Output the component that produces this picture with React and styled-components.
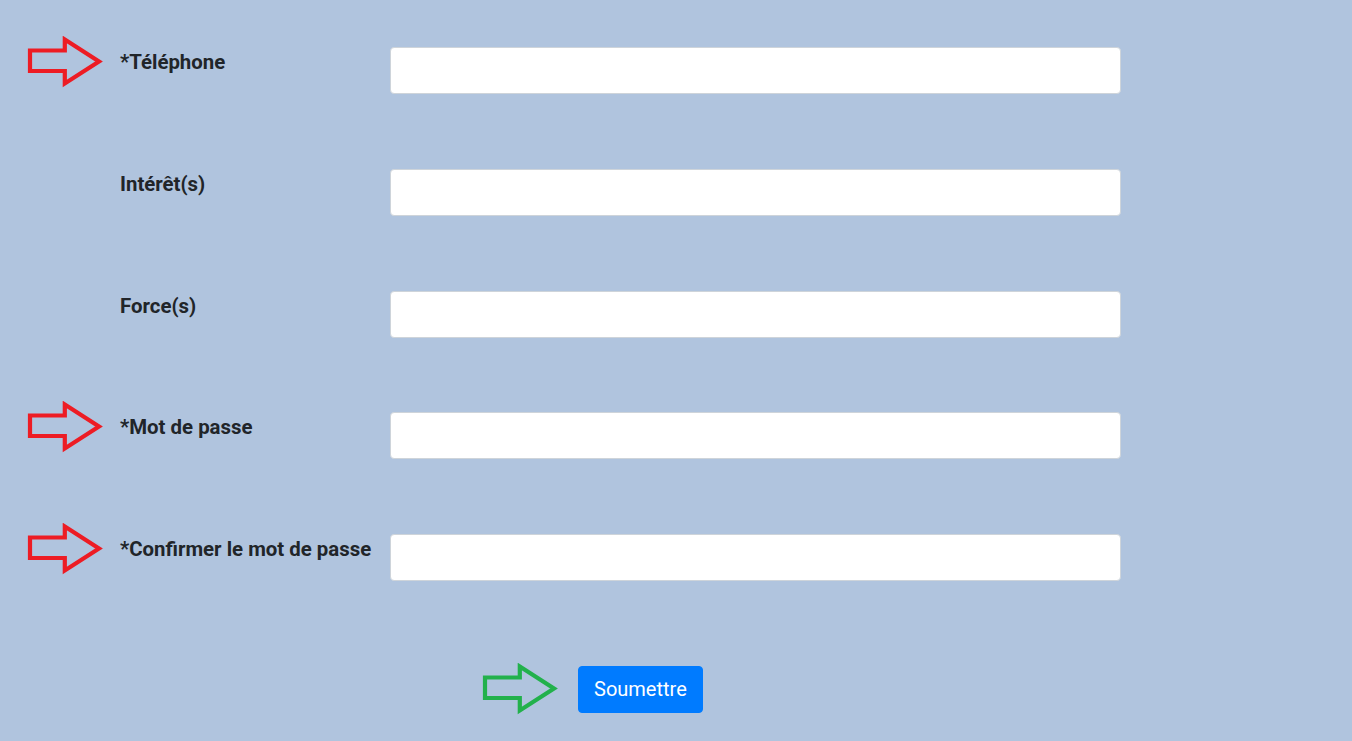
import React from "react";
import styled, { createGlobalStyle } from "styled-components";

const Global = createGlobalStyle`
  html, body { margin: 0; padding: 0; }
  body {
    background: #b0c4de;
    font-family: Roboto, "Liberation Sans", sans-serif;
    color: #212529;
    min-height: 741px;
  }
`;

const Form = styled.form`
  display: flex;
  flex-direction: column;
  padding-top: 36px;
`;

const Rows = styled.div`
  display: flex;
  flex-direction: column;
  gap: 63.75px;
`;

const Row = styled.div`
  display: grid;
  grid-template-columns: 120px 270px 731px;
  align-items: start;
`;

const ArrowCell = styled.div`
  padding-left: 26px;
  height: 52px;
`;

const Label = styled.label`
  font-size: 20.4px;
  font-weight: 700;
  line-height: 30px;
  padding-top: 11px;
  white-space: nowrap;
`;

const Input = styled.input`
  box-sizing: border-box;
  margin-top: 11px;
  width: 731px;
  height: 47px;
  border: 1px solid #ced4da;
  border-radius: 4px;
  background: #fff;
  padding: 8px 16px;
  font-size: 18px;
  font-family: inherit;
  outline: none;
`;

const SubmitRow = styled.div`
  display: flex;
  align-items: center;
  gap: 19px;
  padding-left: 481px;
  margin-top: 82px;
`;

const Button = styled.button`
  height: 47px;
  padding: 0 15px;
  border: 1px solid #007bff;
  border-radius: 4px;
  background: #007bff;
  color: #fff;
  font-family: Roboto, "Liberation Sans", sans-serif;
  font-size: 20px;
  line-height: 1.5;
  cursor: pointer;
`;

const Arrow = ({ color }) => (
  <svg width="78" height="52" viewBox="0 0 78 52" style={{ display: "block" }}>
    <path
      d="M4 14.5 H38.8 V3.5 L73 25.5 L38.8 47.5 V35 H4 Z"
      fill="none"
      stroke={color}
      strokeWidth="4.2"
      strokeLinejoin="miter"
    />
  </svg>
);

const fields = [
  { label: "*Téléphone", required: true },
  { label: "Intérêt(s)", required: false },
  { label: "Force(s)", required: false },
  { label: "*Mot de passe", required: true, type: "password" },
  { label: "*Confirmer le mot de passe", required: true, type: "password" },
];

export default function App() {
  return (
    <>
      <Global />
      <Form onSubmit={(e) => e.preventDefault()}>
        <Rows>
          {fields.map((f) => (
            <Row key={f.label}>
              <ArrowCell>{f.required && <Arrow color="#ed1c24" />}</ArrowCell>
              <Label>{f.label}</Label>
              <Input type={f.type || "text"} />
            </Row>
          ))}
        </Rows>
        <SubmitRow>
          <Arrow color="#22b14c" />
          <Button type="submit">Soumettre</Button>
        </SubmitRow>
      </Form>
    </>
  );
}
